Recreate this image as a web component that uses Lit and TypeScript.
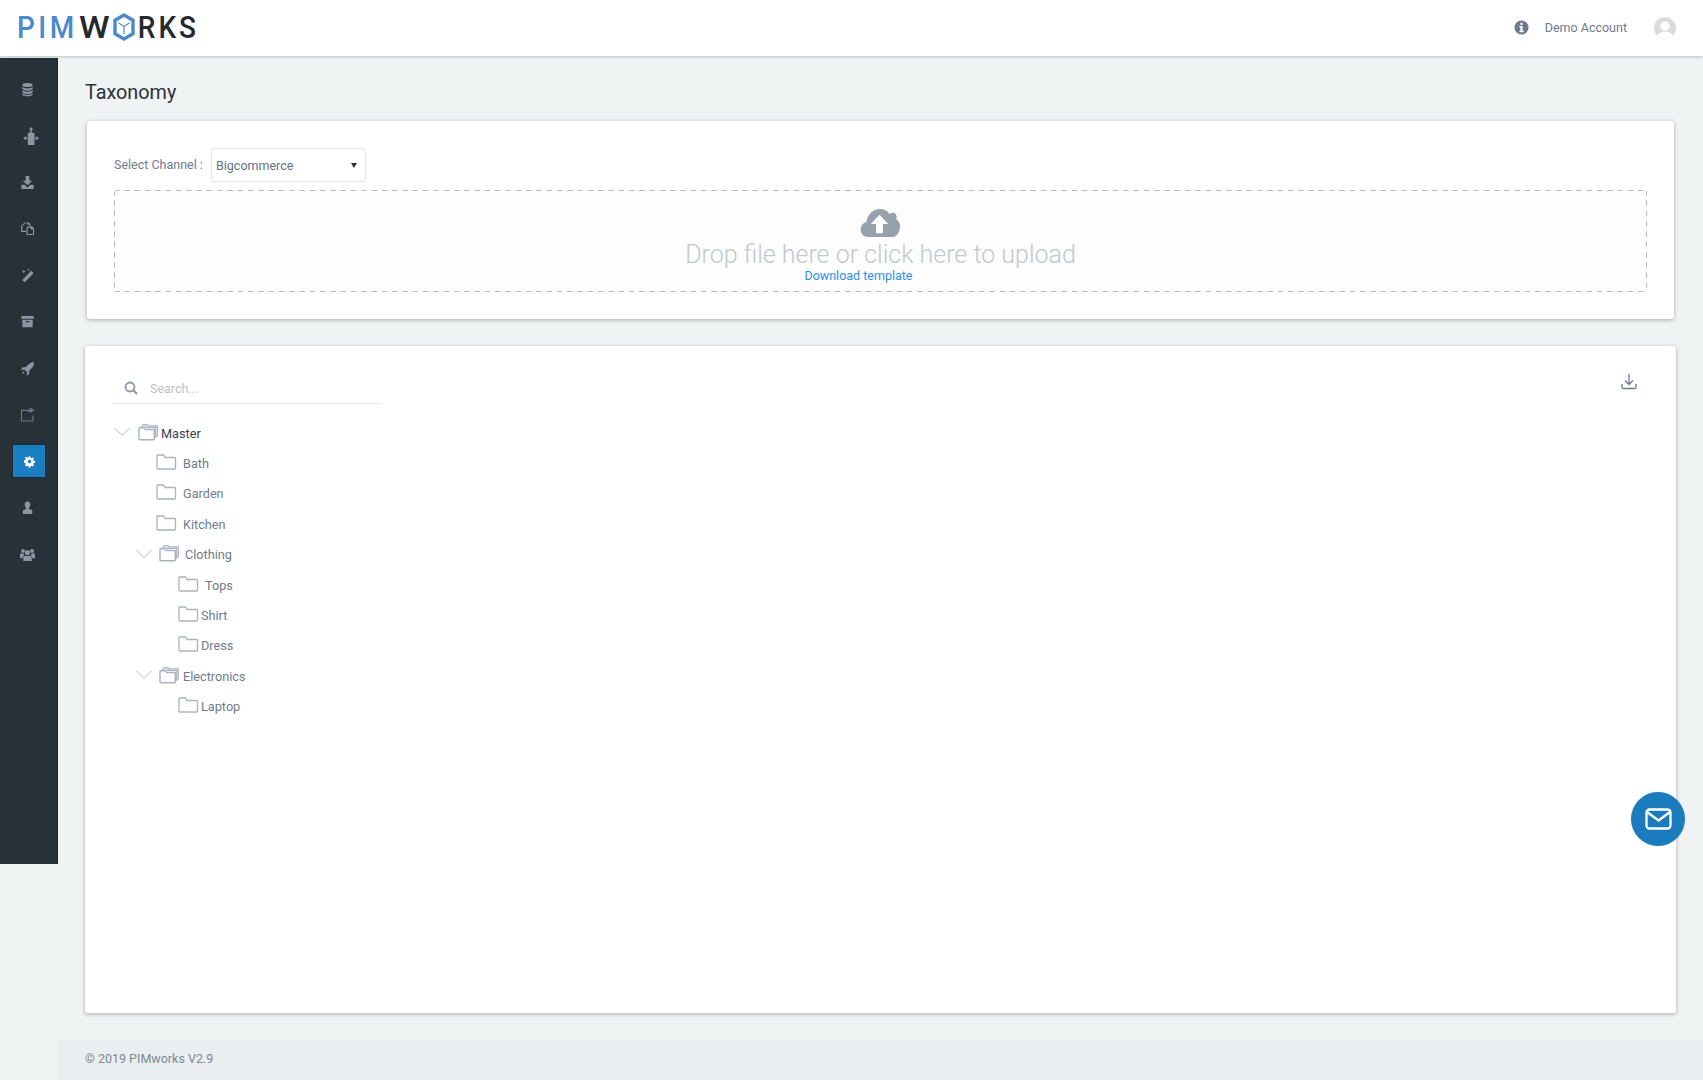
import { LitElement, html, css, svg } from "lit";
import { customElement } from "lit/decorators.js";

const navIcons = [
  svg`<ellipse cx="8" cy="3.200" rx="5.500" ry="2.200"/><path d="M2.500 5v2c0 1.200 2.500 2.200 5.500 2.200s5.500-1 5.500-2.200V5c-1 1.200-3.200 1.800-5.500 1.800S3.500 6.200 2.500 5zM2.500 8.600v2c0 1.200 2.500 2.200 5.500 2.200s5.500-1 5.500-2.200v-2c-1 1.200-3.200 1.800-5.500 1.800s-4.500-.6-5.500-1.800zM2.500 12v1.300c0 1.100 2.500 2 5.500 2s5.500-.9 5.500-2V12c-1 1.100-3.200 1.600-5.500 1.600S3.500 13.100 2.500 12z"/>`,
  svg`<path d="M9 0l2 2.500H9.700V5H12v11H6V5h2.300V2.500H7zM5.300 8v1.300h-.9V8L2 10l2.400 2v-1.200h.9V12zM12.700 8v1.300h.9V8L16 10l-2.400 2v-1.200h-.9V12z"/>`,
  svg`<path d="M6 1h4v5h3L8 11 3 6h3zM1.500 10.500H5l3 2.800 3-2.800h3.500v4.500h-13z"/>`,
  svg`<path fill-rule="evenodd" d="M5 1.500h4.500l1.500 1.800V5h-1V4H8V2.500H5.500L2.500 5.500V10.500H6.300v1.200H1.200V5zM8.500 5.500h4.300L15 7.800V15H7V7zM9 6.800L8.200 7.800V13.800H13.800V8.800H11V6.800z"/>`,
  svg`<path d="M12 3l2.500 2.500L5 15.300 2.400 12.700zM4 1.500l.6 1.600 1.600.6-1.600.6L4 5.900l-.6-1.600-1.600-.6 1.600-.6zM9 .5l.4 1.100 1.100.4-1.100.4L9 3.500l-.4-1.100L7.500 2l1.100-.4z"/>`,
  svg`<path fill-rule="evenodd" d="M1.500 2h13v3h-13zM2.500 6h11v8h-11zM6 7.500v1.200h4V7.500z"/>`,
  svg`<path d="M15 1c-.2 4-2 7-5 9l-.5 4-2.500 1.500.5-3.500-3-3-3.500.5L2.500 7l4-.5C8.500 3.500 11 1.500 15 1zM3.500 11L5 12.500 2 14z"/>`,
  svg`<path fill="#6d7886" d="M1 3h8.500v1.200H2.200v10.100h11V9H14.500v6.500H1zM10.500 .5L15.500 3.500l-5 3V5H8V2.800h2.500z"/>`,
  svg`<path fill-rule="evenodd" d="M6.800 1h2.400l.4 2 1.200.5 1.700-1.100 1.700 1.700-1.100 1.700.5 1.200 2 .4v2.400l-2 .4-.5 1.200 1.100 1.700-1.700 1.700-1.700-1.100-1.200.5-.4 2H6.800l-.4-2-1.200-.5-1.700 1.100-1.700-1.700 1.100-1.700-.5-1.200-2-.4V6.400l2-.4.500-1.200-1.100-1.700 1.700-1.700 1.700 1.100L6.400 3zM8 5.500a2.500 2.500 0 100 5 2.500 2.500 0 000-5z" transform="translate(.8 .8) scale(.9)"/>`,
  svg`<path d="M8 1.500a3 3 0 013 3.500c0 1.500-.8 3-1.500 3.500v1L13 11v4H3v-4l3.500-1.500v-1C5.800 8 5 6.500 5 5a3 3 0 013-3.500z"/>`,
  svg`<circle cx="8" cy="6" r="2.700"/><circle cx="3.200" cy="4.300" r="2.100"/><circle cx="12.800" cy="4.300" r="2.100"/><path d="M4.500 9.500h7l1 1v4.500h-9v-4.500zM0 7h3.600c.3.800.7 1.300 1.200 1.700L3 10v2H0zM16 7h-3.600c-.3.800-.7 1.300-1.200 1.700L13 10v2h3z"/>`,
];

const tree = [
  { name: "Master", chev: 0, x: 26, open: true, gap: 2, dark: true },
  { name: "Bath", x: 44, gap: 6 },
  { name: "Garden", x: 44, gap: 6 },
  { name: "Kitchen", x: 44, gap: 6 },
  { name: "Clothing", chev: 22, x: 47, open: true, gap: 5 },
  { name: "Tops", x: 66, gap: 6 },
  { name: "Shirt", x: 66, gap: 2 },
  { name: "Dress", x: 66, gap: 2 },
  { name: "Electronics", chev: 22, x: 47, open: true, gap: 3 },
  { name: "Laptop", x: 66, gap: 2 },
];

const folder = svg`<path d="M1 3.500V15a1 1 0 001 1h16.500a1 1 0 001-1V5.500a1 1 0 00-1-1H9L7.500 2H2a1 1 0 00-1 1.500z" fill="none" stroke="#aab2bf" stroke-width="1.300"/>`;
const folderOpen = svg`<g fill="none" stroke="#aab2bf" stroke-width="1.200"><path d="M5 2V1.500h4l1 1.300h9.300v10.200h-1.500"/><path d="M3.500 4V3h4l1 1.300h9.200v10.200h-1.500"/><path d="M1 5.500V16a.8.8 0 00.8.8h13.700a.8.8 0 00.8-.8V6.500h-8.800L6.300 4.800H1.800a.8.8 0 00-.8.700z" stroke-width="1.400"/></g>`;

@customElement("app-root")
export class AppRoot extends LitElement {
  static styles = css`
    :host { display: block; width: 1703px; height: 1080px; overflow: hidden; position: relative; background: #f0f3f4; font-family: Roboto, "Liberation Sans", sans-serif; color: #6f7b8c; font-size: 12.500px; }
    .top { height: 56px; background: #fff; display: flex; align-items: center; padding: 0 27px 0 17px; box-shadow: 0 1px 3px rgba(0,0,0,.22); position: relative; z-index: 2; }
    .logo { display: flex; align-items: center; font: 500 28px/1 Roboto, sans-serif; margin-top: -1px; }
    .logo span { display: inline-block; transform-origin: left center; }
    .logo .b { color: #4a8acb; letter-spacing: 3.500px; transform: scaleY(1.100); }
    .logo .w { color: #262a2e; transform: scaleX(1.240) scaleY(1.100); margin-left: 1px; width: 31px; }
    .logo .d { color: #262a2e; letter-spacing: 3px; margin-left: 3px; transform: scaleY(1.100); }
    .logo svg { width: 22px; height: 28px; margin-left: 3px; margin-top: -1px; }
    .spacer { flex: 1; }
    .info { width: 15px; height: 15px; margin-right: 16px; margin-top: -2px; }
    .acct { color: #6f7b8c; margin-right: 27px; margin-top: -1px; }
    .avatar { width: 22px; height: 22px; }
    .body { display: flex; height: 1024px; }
    .side { width: 58px; height: 806px; margin-top: 2px; background: #263238; box-shadow: inset -1px 0 0 #1c252a; display: flex; flex-direction: column; padding-top: 8px; box-sizing: border-box; flex: none; }
    .nav { height: 46.500px; width: 58px; display: flex; align-items: center; justify-content: center; flex: none; }
    .nav svg { width: 15px; height: 15px; fill: #8b95a3; margin-right: 3px; }
    .nav.arrows svg { width: 18px; height: 18px; margin-right: -2px; }
    .nav.active i { width: 32px; height: 32px; background: #1a7fc1; display: flex; align-items: center; justify-content: center; box-shadow: 0 0 0 1px #1f2a30; margin-right: 1px; }
    .nav.active svg { fill: #fff; margin: 0 0 0 1px; width: 13px; height: 13px; }
    .main { flex: 1; display: flex; flex-direction: column; min-width: 0; }
    .content { flex: 1; padding: 0 27px; }
    h1 { margin: 0; font: 400 19.800px/24px Roboto, sans-serif; color: #2b3136; padding-top: 25px; height: 40px; }
    .card { background: #fff; border-radius: 3px; box-shadow: 0 1px 4px rgba(0,0,0,.3); }
    .c1 { height: 198px; margin: 0 2px 27px 2px; padding: 27px 27px 0 27px; box-sizing: border-box; }
    .chan { display: flex; align-items: center; height: 34px; }
    .chan label { width: 97px; margin-bottom: 2px; }
    .select { width: 155px; height: 34px; box-sizing: border-box; border: 1px solid #e1e6e8; border-radius: 3px; display: flex; align-items: center; justify-content: space-between; padding: 0 8px 0 4px; color: #5f7288; }
    .arrow { width: 0; height: 0; border: 3.500px solid transparent; border-top: 5px solid #333; border-bottom: 0; margin-right: 0; }
    .drop {
      margin-top: 8px; height: 102px; box-sizing: border-box; border-radius: 3px; background-color: #fdfdfd;
      background-image:
        linear-gradient(90deg, #b8b8b8 6px, transparent 6px),
        linear-gradient(90deg, #b8b8b8 6px, transparent 6px),
        linear-gradient(180deg, #b8b8b8 6px, transparent 6px),
        linear-gradient(180deg, #b8b8b8 6px, transparent 6px);
      background-size: 10.300px 1px, 10.300px 1px, 1px 10.300px, 1px 10.300px;
      background-position: 0 0, 0 100%, 0 0, 100% 0;
      background-repeat: repeat-x, repeat-x, repeat-y, repeat-y;
      display: flex; flex-direction: column; align-items: center; padding-top: 17px;
    }
    .drop svg { width: 42px; height: 31px; display: block; margin-right: 2px; }
    .big { font: 300 25px/29px Roboto, sans-serif; color: #c3c8ce; margin-top: 2px; }
    .tpl { color: #2f8fe8; line-height: 16px; margin-top: -1px; margin-right: 44px; }
    .c2 { height: 667px; padding: 27px 39px 0 27px; box-sizing: border-box; position: relative; display: flex; justify-content: space-between; align-items: flex-start; }
    .search { width: 269px; height: 31px; border-bottom: 1px solid #e7ebed; display: flex; align-items: center; gap: 12px; padding-left: 12px; box-sizing: border-box; color: #bcc2c9; }
    .search svg { width: 14px; height: 14px; }
    .tree { margin-top: 14px; font-size: 12.700px; }
    .row { height: 30.400px; display: flex; align-items: center; position: relative; color: #6f7b8c; }
    .row.dark { color: #39434f; }
    .row svg.f { width: 21px; height: 18px; flex: none; margin-top: -3px; }
    .chev { position: absolute; top: 9px; width: 16px; height: 10px; }
    .dl { width: 16px; height: 17px; margin-top: 0; }
    .foot { height: 40px; background: #ebeef0; border-top: 1px solid #e8ebed; box-sizing: border-box; display: flex; align-items: center; padding: 0 0 4px 27px; color: #7d8894; }
    .fab { position: absolute; left: 1631px; top: 792px; width: 54px; height: 54px; border-radius: 50%; background: #1a7bbd; display: flex; align-items: center; justify-content: center; box-shadow: 0 0 2px rgba(0,0,0,.15); }
    .fab svg { width: 27px; height: 22px; }
  `;

  render() {
    return html`
      <div class="top">
        <div class="logo">
          <span class="b">PIM</span><span class="w">W</span>
          <svg viewBox="0 0 22 28">
            <path d="M11 2L20 7.200v13.600L11 26 2 20.800V7.200z" fill="none" stroke="#4a8acb" stroke-width="3.400"/>
            <path d="M5.500 10l5.500 3.400 5.500-3.400M11 13.400V21" fill="none" stroke="#4a8acb" stroke-width="1.200"/>
          </svg>
          <span class="d">RKS</span>
        </div>
        <div class="spacer"></div>
        <svg class="info" viewBox="0 0 16 16"><circle cx="8" cy="8" r="7.500" fill="#6b7a8c"/><rect x="6.800" y="3" width="2.400" height="2.300" fill="#fff"/><path d="M5.800 6.500h3.400V11.500h1.100V13H5.800v-1.500h1v-3.500h-1z" fill="#fff"/></svg>
        <span class="acct">Demo Account</span>
        <svg class="avatar" viewBox="0 0 22 22"><defs><clipPath id="av"><circle cx="11" cy="11" r="11"/></clipPath></defs><circle cx="11" cy="11" r="11" fill="#dcdcdc"/><g clip-path="url(#av)" fill="#fff"><circle cx="11" cy="9" r="4.600"/><path d="M2.500 22c0-5 3.500-7.300 8.500-7.300s8.500 2.300 8.500 7.300z"/></g></svg>
      </div>
      <div class="body">
        <nav class="side">
          ${navIcons.map((p, i) => html`<div class="nav ${i === 8 ? "active" : ""} ${i === 1 ? "arrows" : ""}">${i === 8
            ? html`<i><svg viewBox="0 0 16 16">${p}</svg></i>`
            : html`<svg viewBox="0 0 16 16">${p}</svg>`}</div>`)}
        </nav>
        <div class="main">
          <div class="content">
            <h1>Taxonomy</h1>
            <section class="card c1">
              <div class="chan"><label>Select Channel :</label><div class="select"><span>Bigcommerce</span><span class="arrow"></span></div></div>
              <div class="drop">
                <svg viewBox="0 0 42 32"><path d="M9 31C4 31 1 27.500 1 23.500 1 19.500 3.500 16.500 7 15.500 8 8 13.500 2 21 2c5 0 8 2.500 10 5.500 1-1 2-1.500 3.200-1.500 2.500 0 4 2 4 4.500 0 .8-.1 1.500-.5 2.200 2.500 1.300 4 4.500 4 7.300 0 5.500-3.500 11-8.500 11z" fill="#97a1ac"/><path d="M20.500 9l9 9.500h-5.500V28h-7v-9.500H11.500z" fill="#fff" transform="translate(0 -1)"/></svg>
                <div class="big">Drop file here or click here to upload</div>
                <div class="tpl">Download template</div>
              </div>
            </section>
            <section class="card c2">
              <div>
                <div class="search">
                  <svg viewBox="0 0 14 14" fill="none" stroke="#8d98a5" stroke-width="1.800"><circle cx="6" cy="6" r="4.500"/><path d="M9.300 9.300L13 13" stroke-width="2.200"/></svg>
                  <span>Search...</span>
                </div>
                <div class="tree">
                  ${tree.map((n) => html`
                    <div class="row ${n.dark ? "dark" : ""}" style="padding-left:${n.x}px">
                      ${n.chev !== undefined ? html`<svg class="chev" style="left:${n.chev + 2}px" viewBox="0 0 16 10" fill="none" stroke="#b3bac3" stroke-width="1"><path d="M.5 1l7.500 7.500L15.500 1"/></svg>` : ""}
                      <svg class="f" viewBox="0 0 21 18">${n.open ? folderOpen : folder}</svg>
                      <span style="margin-left:${n.gap}px">${n.name}</span>
                    </div>`)}
                </div>
              </div>
              <svg class="dl" viewBox="0 0 16 17" fill="none" stroke="#6f7b8c" stroke-width="1.300"><path d="M8 1v10M4 7.500L8 11.500 12 7.500M1 11v3a1.500 1.500 0 001.500 1.500h11A1.500 1.500 0 0015 14v-3"/></svg>
            </section>
          </div>
          <footer class="foot">© 2019 PIMworks V2.9</footer>
        </div>
      </div>
      <div class="fab"><svg viewBox="0 0 27 22" fill="none" stroke="#fff" stroke-width="2.300"><rect x="1.500" y="1.500" width="24" height="19" rx="3"/><path d="M2 4l11.500 8.500L25 4"/></svg></div>
    `;
  }
}
